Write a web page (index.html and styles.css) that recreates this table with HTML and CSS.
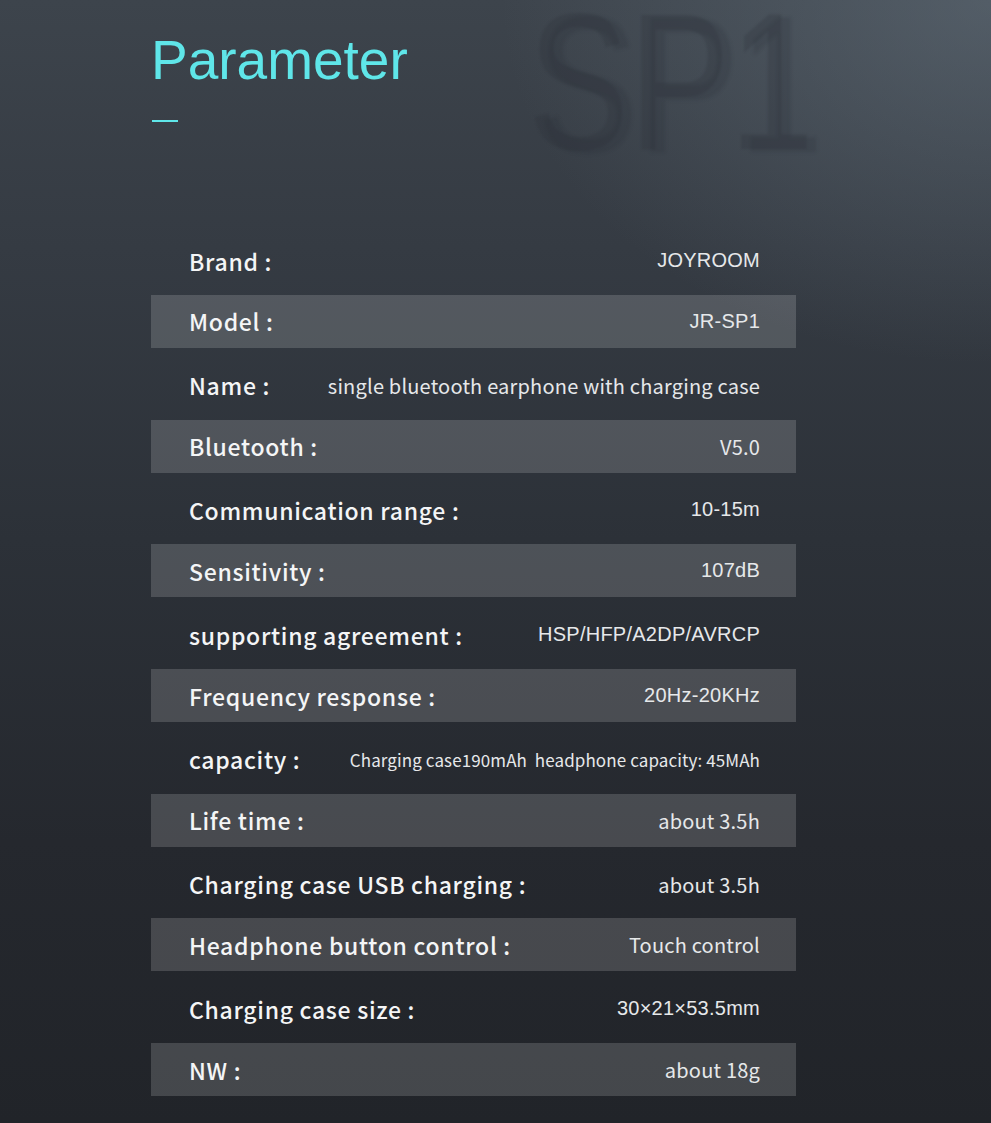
FILE: index.html
```html
<!DOCTYPE html>
<html lang="en">
<head>
<meta charset="utf-8">
<title>Parameter</title>
<link rel="stylesheet" href="styles.css">
</head>
<body>
<div class="page">
  <div class="watermark" aria-hidden="true">SP1</div>
  <div class="content">
    <h1 class="title">Parameter</h1>
    <div class="dash"></div>
    <div class="specs">
      <div class="row plain"><span class="label">Brand :</span><span class="value arial">JOYROOM</span></div>
      <div class="row band"><span class="label">Model :</span><span class="value arial">JR-SP1</span></div>
      <div class="row plain"><span class="label">Name :</span><span class="value">single bluetooth earphone with charging case</span></div>
      <div class="row band"><span class="label">Bluetooth :</span><span class="value">V5.0</span></div>
      <div class="row plain"><span class="label">Communication range :</span><span class="value arial">10-15m</span></div>
      <div class="row band"><span class="label">Sensitivity :</span><span class="value arial">107dB</span></div>
      <div class="row plain"><span class="label">supporting agreement :</span><span class="value arial">HSP/HFP/A2DP/AVRCP</span></div>
      <div class="row band"><span class="label">Frequency response :</span><span class="value arial">20Hz-20KHz</span></div>
      <div class="row plain"><span class="label">capacity :</span><span class="value small">Charging case190mAh&nbsp; headphone capacity: 45MAh</span></div>
      <div class="row band"><span class="label">Life time :</span><span class="value">about 3.5h</span></div>
      <div class="row plain"><span class="label">Charging case USB charging :</span><span class="value">about 3.5h</span></div>
      <div class="row band"><span class="label">Headphone button control :</span><span class="value">Touch control</span></div>
      <div class="row plain"><span class="label">Charging case size :</span><span class="value arial">30×21×53.5mm</span></div>
      <div class="row band"><span class="label">NW :</span><span class="value">about 18g</span></div>
    </div>
  </div>
</div>
</body>
</html>
```
FILE: styles.css
```css
* { box-sizing: border-box; }
html, body { margin: 0; padding: 0; }
body { background: #22252a; }

.page {
  position: relative;
  width: 991px;
  min-height: 1123px;
  overflow: hidden;
  background:
    radial-gradient(ellipse 700px 520px at 100% 0%, rgba(110, 124, 136, 0.45), rgba(110, 124, 136, 0) 70%),
    linear-gradient(180deg, #3d444c 0%, #353b43 22%, #2c3138 48%, #25282e 75%, #212429 100%);
  font-family: "Noto Sans CJK SC", "Noto Sans", sans-serif;
  color: #f2f3f4;
}

.watermark {
  position: absolute;
  left: 528px;
  top: 0;
  font-family: "Liberation Sans", Arial, sans-serif;
  font-size: 194px;
  line-height: 0.85;
  white-space: nowrap;
  transform: scaleX(0.78);
  transform-origin: left top;
  color: rgba(40, 46, 54, 0.24);
  text-shadow: 12px 3px 3px rgba(40, 46, 54, 0.2);
  filter: blur(1.2px);
  pointer-events: none;
}

.content {
  position: relative;
  padding: 28px 0 0 151px;
  width: 796px;
}

.title {
  margin: 0;
  font-family: "Liberation Sans", Arial, sans-serif;
  font-weight: 400;
  font-size: 55px;
  line-height: 64px;
  color: #5fe6e9;
}

.dash {
  margin: 28px 0 0 1px;
  width: 26px;
  height: 2px;
  background: #5fe6e9;
}

.specs {
  margin-top: 110.6px;
  display: flex;
  flex-direction: column;
  gap: 9.35px;
  width: 645px;
}

.row {
  height: 53px;
  display: flex;
  align-items: center;
  justify-content: space-between;
  padding: 0 36px 0 38px;
}
.row.plain { padding-top: 3px; }
.row.band { background: rgba(255, 255, 255, 0.16); }

.label {
  font-size: 23px;
  font-weight: 500;
  letter-spacing: 0.7px;
  color: #f4f5f6;
  white-space: nowrap;
}

.value {
  font-size: 20px;
  font-weight: 400;
  letter-spacing: 0.2px;
  color: #e6e8ea;
  white-space: nowrap;
}
.value.arial {
  font-family: "Liberation Sans", Arial, sans-serif;
  font-size: 20px;
  letter-spacing: 0.25px;
}
.value.small {
  font-size: 17px;
  letter-spacing: 0.1px;
}
```
